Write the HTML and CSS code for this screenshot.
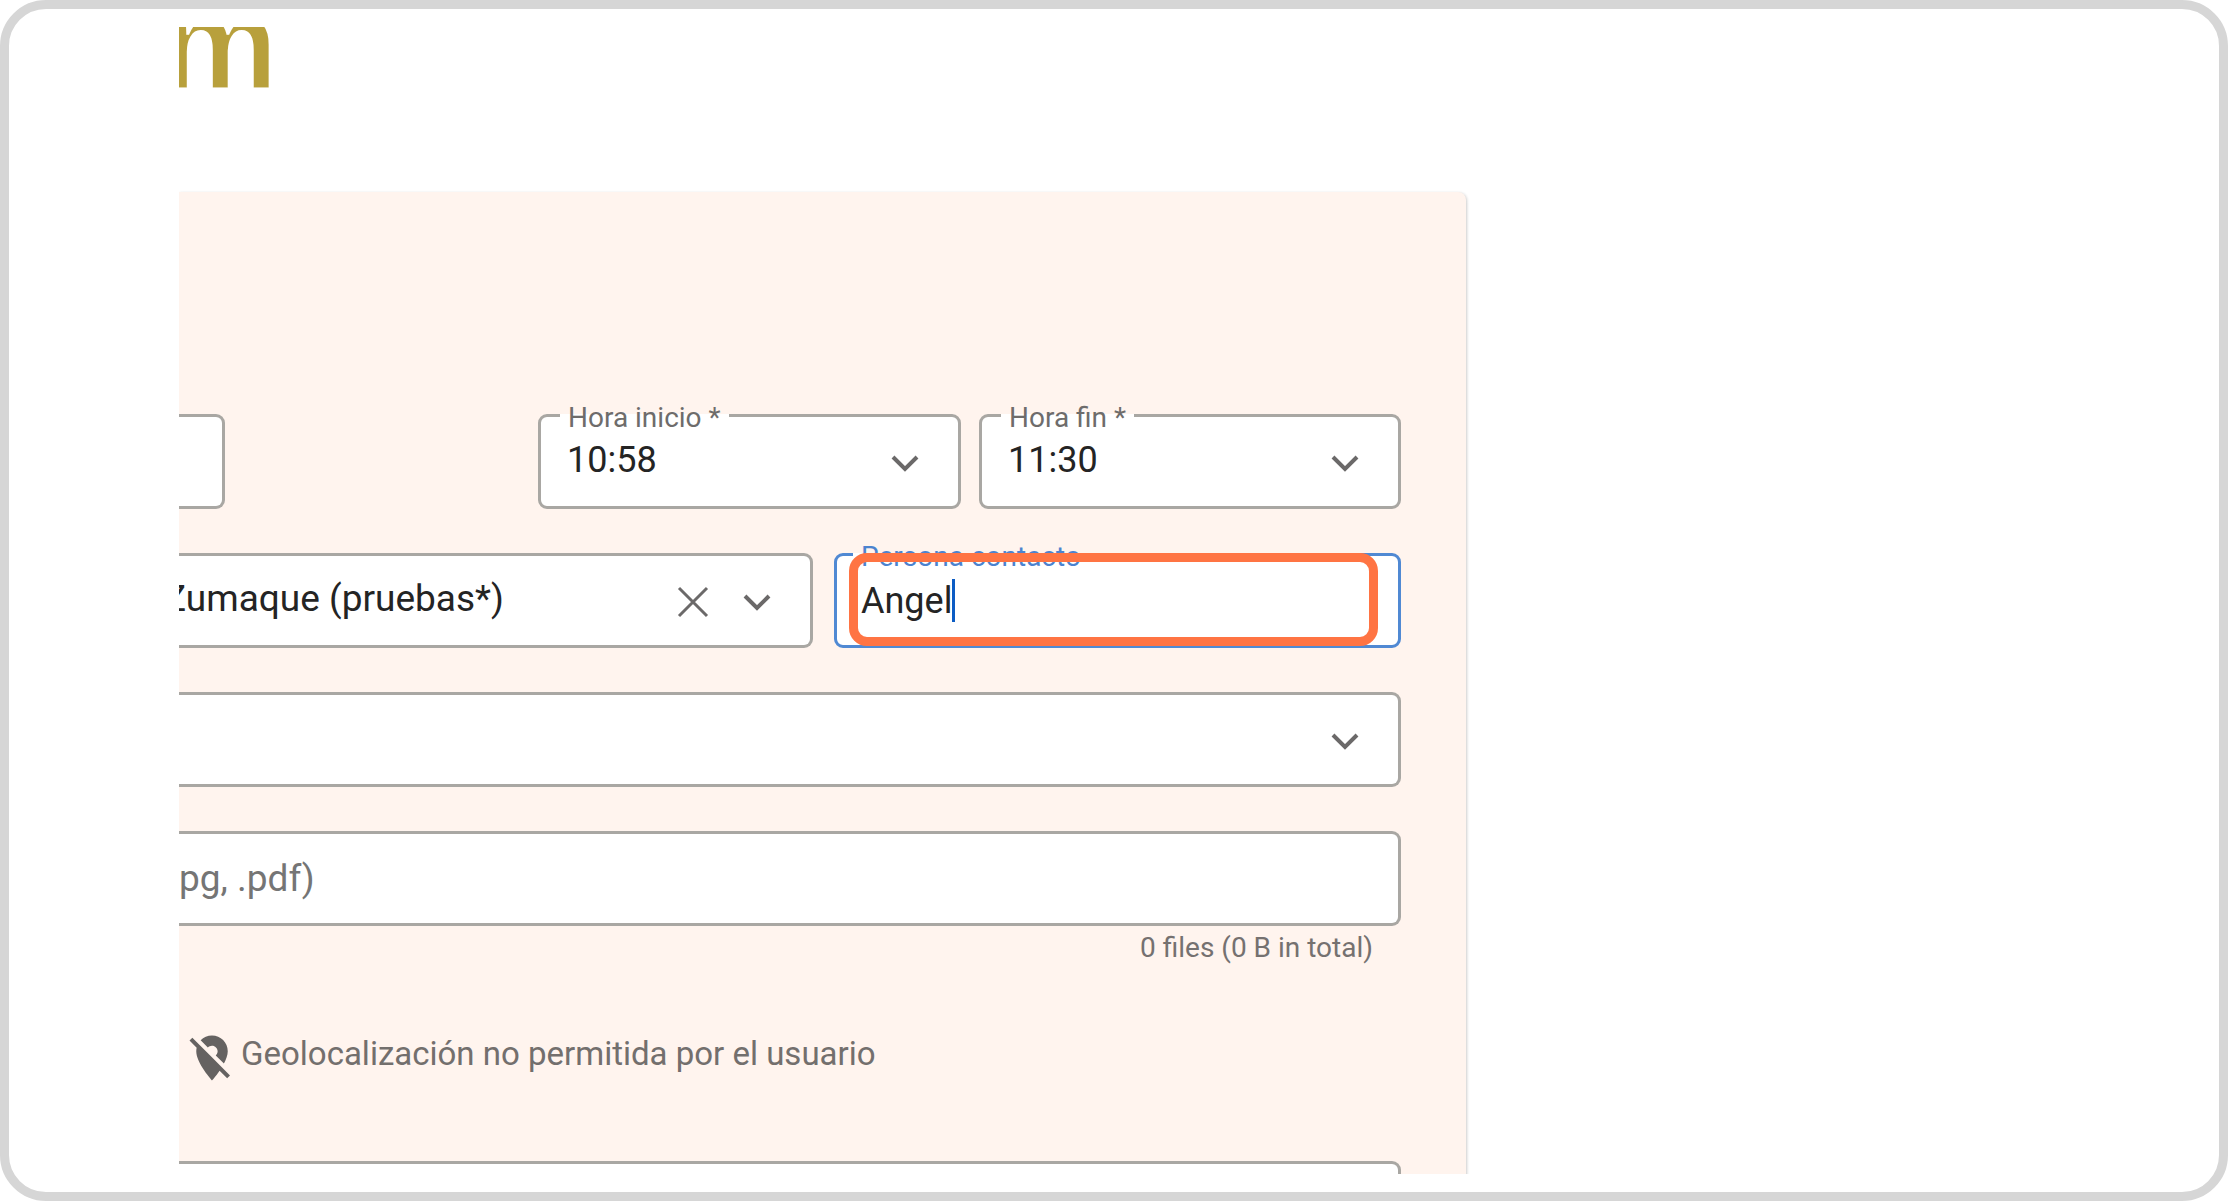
FILE: index.html
```
<!DOCTYPE html>
<html lang="es">

<head>
    <meta charset="UTF-8">
    <meta name="viewport" content="width=device-width, initial-scale=1.0">
    <title>Parte de visita</title>
    <link rel="stylesheet" href="styles.css">
</head>

<body>
    <div class="frame">
        <div class="viewport">
            <header class="brand">m</header>

            <form class="card">
                <div class="row row-time">
                    <div class="field cut">
                        <input type="text" aria-label="Fecha">
                    </div>
                    <div class="field start">
                        <label for="horaInicio">Hora inicio *</label>
                        <select id="horaInicio">
                            <option>10:58</option>
                        </select>
                        <svg class="chevron" viewBox="0 0 28 18"><path d="M2 2l12 12L26 2" /></svg>
                    </div>
                    <div class="field">
                        <label for="horaFin">Hora fin *</label>
                        <select id="horaFin">
                            <option>11:30</option>
                        </select>
                        <svg class="chevron" viewBox="0 0 28 18"><path d="M2 2l12 12L26 2" /></svg>
                    </div>
                </div>

                <div class="row row-client">
                    <div class="field cut client">
                        <input type="text" value="Zumaque (pruebas*)" aria-label="Cliente">
                        <button type="button" class="clear" aria-label="Borrar">
                            <svg viewBox="0 0 32 32"><path d="M2 2l28 28M30 2L2 30" /></svg>
                        </button>
                        <svg class="chevron" viewBox="0 0 28 18"><path d="M2 2l12 12L26 2" /></svg>
                    </div>
                    <div class="field active">
                        <label for="persona">Persona contacto</label>
                        <input type="text" id="persona" value="Angel">
                        <span class="caret"></span>
                        <span class="highlight"></span>
                    </div>
                </div>

                <div class="row">
                    <div class="field cut">
                        <select aria-label="Motivo">
                            <option></option>
                        </select>
                        <svg class="chevron" viewBox="0 0 28 18"><path d="M2 2l12 12L26 2" /></svg>
                    </div>
                </div>

                <div class="row row-files">
                    <div class="field cut">
                        <input type="text" placeholder="pg, .pdf)" aria-label="Archivos">
                    </div>
                </div>
                <p class="hint">0 files (0 B in total)</p>

                <div class="geo">
                    <svg viewBox="0 0 24 24"><path d="M12 6.500c1.380 0 2.500 1.120 2.500 2.500 0 .74-.33 1.390-.83 1.850l3.630 3.630c.98-1.860 1.700-3.800 1.700-5.480 0-3.870-3.130-7-7-7-1.980 0-3.760.83-5.040 2.150l3.190 3.190c.46-.52 1.110-.84 1.850-.84zm4.370 9.600l-4.630-4.630-.11-.11L3.270 3 2 4.270l3.180 3.180C5.070 7.950 5 8.470 5 9c0 5.250 7 13 7 13s1.670-1.850 3.380-4.350L18.730 21 20 19.730l-3.630-3.630z" /></svg>
                    <span>Geolocalización no permitida por el usuario</span>
                </div>

                <div class="field cut">
                    <textarea aria-label="Observaciones"></textarea>
                </div>
            </form>
        </div>
    </div>
</body>

</html>
```
FILE: styles.css
```
* {
    margin: 0;
    padding: 0;
    box-sizing: border-box;
    font-family: Roboto, "Liberation Sans", sans-serif;
}

body {
    background: #fff;
}

.frame {
    height: 100vh;
    padding: 18px 170px;
    border: 9px solid #d6d6d6;
    border-radius: 46px;
}

.viewport {
    display: grid;
    grid-template-columns: 1287fr 583fr;
    grid-template-rows: 165px 1fr;
    height: 100%;
    overflow: hidden;
}

/* Logo */

.brand {
    grid-column: 1 / -1;
    margin: -49px 0 0 -18px;
    color: #b8a03c;
    font-family: "Liberation Sans Narrow", "Liberation Sans", sans-serif;
    font-size: 132px;
    font-weight: bold;
    line-height: 132px;
    -webkit-text-stroke: 3px #fff;
}

/* Form card */

.card {
    align-self: start;
    padding: 222px 65px 40px 0;
    background: #fff4ee;
    border-radius: 0 8px 0 0;
    box-shadow: 1px 1px 3px rgba(0, 0, 0, 0.2);
}

.row {
    display: grid;
    margin-bottom: 44px;
}

.row-time {
    grid-template-columns: 46fr 313fr 423fr 18fr 422fr;
}

.row-time .start {
    grid-column: 3;
}

.row-time .field:last-child {
    grid-column: 5;
}

.row-client {
    grid-template-columns: 634fr 567fr;
    column-gap: 21px;
}

.row-files {
    margin-bottom: 0;
}

.field {
    position: relative;
    height: 95px;
    background: #fff;
    border: 3px solid #a9a7a3;
    border-radius: 9px;
}

.field.cut {
    border-left: none;
    border-radius: 0 9px 9px 0;
}

.field label {
    position: absolute;
    top: -15px;
    left: 19px;
    padding: 0 8px;
    background: linear-gradient(#fff, #fff) 0 12px / 100% 3px no-repeat;
    color: #6e6c6b;
    font-size: 28px;
    line-height: 32px;
}

.field input,
.field select,
.field textarea {
    display: block;
    width: 100%;
    height: 100%;
    padding: 0 26px 4px;
    background: transparent;
    border: none;
    outline: none;
    appearance: none;
    resize: none;
    color: #242424;
    font-size: 36px;
}

.field.cut input {
    padding-left: 0;
    font-size: 37px;
}

.row-files .field input {
    padding-bottom: 0;
}

.field input::placeholder {
    color: #757575;
    opacity: 1;
}

.client input {
    text-indent: -15px;
}

.chevron {
    position: absolute;
    top: 38px;
    right: 39px;
    width: 28px;
    height: 18px;
    pointer-events: none;
}

.chevron path,
.clear path {
    fill: none;
    stroke: #6b6969;
    stroke-width: 4;
}

.clear {
    position: absolute;
    top: 30px;
    right: 101px;
    width: 32px;
    height: 32px;
    background: none;
    border: none;
    cursor: pointer;
}

.clear svg {
    display: block;
}

.clear path {
    stroke-width: 3;
}

/* Focused field */

.field.active {
    border-color: #5089d3;
}

.field.active label {
    left: 16px;
    color: #4c83cf;
}

.field.active input {
    padding: 0 24px;
}

.caret {
    position: absolute;
    top: 23px;
    left: 115px;
    width: 3px;
    height: 43px;
    background: #0b5cc4;
}

.highlight {
    position: absolute;
    top: -3px;
    right: 20px;
    bottom: -1px;
    left: 12px;
    border: 9px solid #ff7443;
    border-radius: 18px;
    pointer-events: none;
}

.hint {
    padding: 6px 28px 0 0;
    color: #757170;
    font-size: 28px;
    line-height: 32px;
    text-align: right;
}

.geo {
    display: flex;
    align-items: flex-start;
    gap: 2px;
    margin: 67px 0 76px 6px;
    color: #736f6d;
    font-size: 33px;
    line-height: 46px;
}

.geo svg {
    width: 54px;
    height: 54px;
    fill: #656261;
}
```
